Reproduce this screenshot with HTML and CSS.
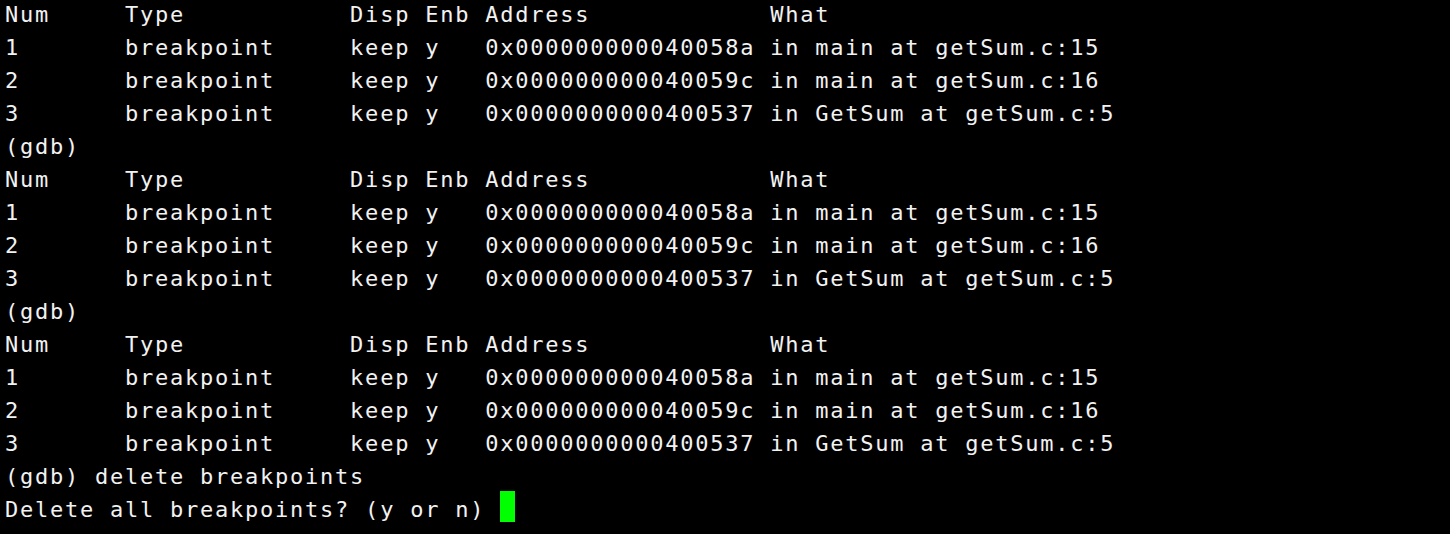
FILE: index.html
```html
<!DOCTYPE html>
<html>
<head>
<meta charset="utf-8">
<link rel="stylesheet" href="styles.css">
</head>
<body>
<pre class="term">Num     Type           Disp Enb Address            What
1       breakpoint     keep y   0x000000000040058a in main at getSum.c:15
2       breakpoint     keep y   0x000000000040059c in main at getSum.c:16
3       breakpoint     keep y   0x0000000000400537 in GetSum at getSum.c:5
(gdb)
Num     Type           Disp Enb Address            What
1       breakpoint     keep y   0x000000000040058a in main at getSum.c:15
2       breakpoint     keep y   0x000000000040059c in main at getSum.c:16
3       breakpoint     keep y   0x0000000000400537 in GetSum at getSum.c:5
(gdb)
Num     Type           Disp Enb Address            What
1       breakpoint     keep y   0x000000000040058a in main at getSum.c:15
2       breakpoint     keep y   0x000000000040059c in main at getSum.c:16
3       breakpoint     keep y   0x0000000000400537 in GetSum at getSum.c:5
(gdb) delete breakpoints
Delete all breakpoints? (y or n) <span class="cursor"> </span></pre>
</body>
</html>
```
FILE: styles.css
```css
html, body {
  margin: 0;
  padding: 0;
  background: #000;
  height: 100%;
  overflow: hidden;
}
.term {
  margin: -2px 0 0 5px;
  font-family: "DejaVu Sans Mono", monospace;
  font-size: 22px;
  letter-spacing: 1.76px;
  line-height: 33px;
  color: #f2f2f2;
  white-space: pre;
}
.cursor {
  display: inline-block;
  width: 15px;
  height: 31px;
  background: #00ff00;
  vertical-align: top;
  margin-top: -2px;
}
```
